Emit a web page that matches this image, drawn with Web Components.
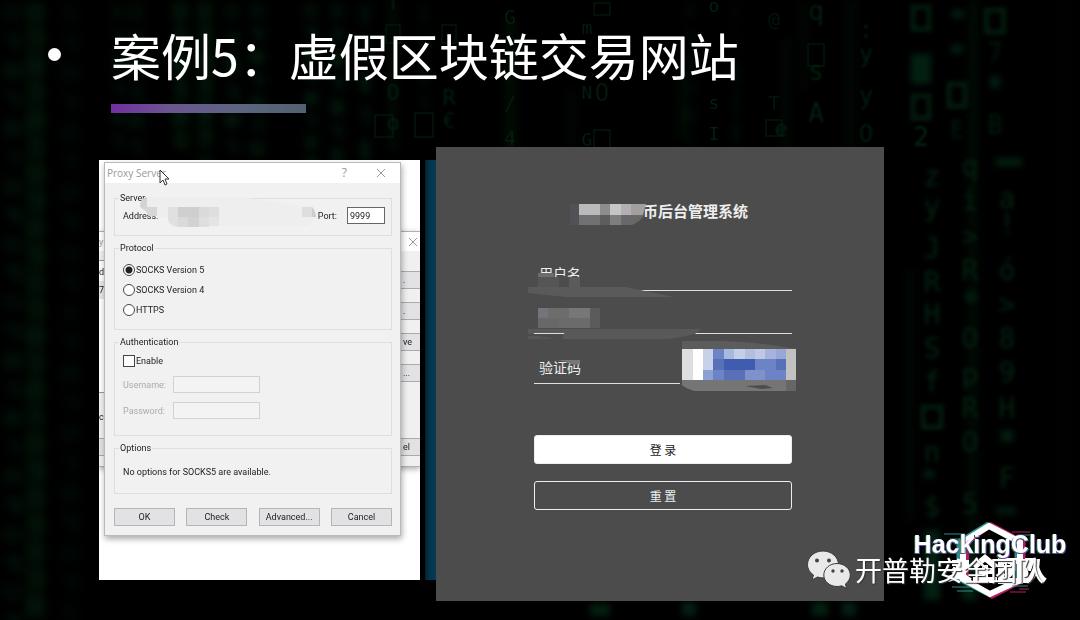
<!DOCTYPE html>
<html lang="zh-CN">
<head>
<meta charset="utf-8">
<meta name="viewport" content="width=device-width, initial-scale=1">
<title>案例5：虚假区块链交易网站</title>
<style>
  body { margin: 0; background: #000; color: #fff; font-family: "Noto Sans", "Noto Sans CJK SC", sans-serif; }
</style>
</head>
<body>
<case-slide>
  <slide-title slot="title">案例5：虚假区块链交易网站</slide-title>
  <desktop-shot slot="left"></desktop-shot>
  <login-panel slot="right"></login-panel>
  <club-logo slot="mark">HackingClub</club-logo>
  <team-mark slot="mark">开普勒安全团队</team-mark>
</case-slide>

<script>
class Base extends HTMLElement {
  constructor() {
    super();
    this.attachShadow({ mode: 'open' }).innerHTML = this.constructor.html;
  }
}

/* Falling glyph columns behind the slide */
class RainBackdrop extends HTMLElement {
  constructor() {
    super();
    // Readable columns: x, size, blur, opacity, then glyph and baseline pairs
    const cols = [
      [393, 22, 1, .9, 'T', 10, 'O', 100, 'o', 130],
      [449, 22, 1, .8, 'R', 105, '€', 128],
      [510, 20, 0, .8, 'G', 24, '/', 110, '4', 145],
      [587, 18, 0, .8, 'm', 34, 'N', 99, 'G', 146],
      [602, 24, 0, .7, 'O', 101],
      [714, 18, 0, .9, 'o', 12, 's', 109, 'I', 140],
      [774, 20, 0, .6, '@', 26, 'T', 110],
      [781, 22, 1, 1, 'e', 136],
      [816, 26, 1, .9, 'q', 20, 's', 80, 'A', 122],
      [866, 24, 1, .8, ':', 38, 'y', 62, 'y', 104, 'O', 142],
      [921, 26, 1, 1, '2', 146],
      [957, 24, 2, .8, 'E', 138],
      [995, 26, 2, .8, '7', 62, 'B', 134],
      [932, 28, 2, 1, 'z', 186, 'y', 216, 'J', 258, 'R', 292, 'H', 324, 'S', 358, 'f', 392, 'n', 462, '$', 516],
      [970, 28, 2, 1, 'q', 176, 'i', 210, '>', 246, 'R', 280, 'O', 348, 'p', 384, 'R', 418, 'O', 452, '5', 514],
      [1007, 28, 2, 1, 'a', 208, '!', 234, 'ó', 280, '>', 314, '8', 348, '9', 382, 'H', 418, 'F', 488]
    ];
    const text = cols.map(([x, size, blur, o, ...g]) => {
      let t = '';
      for (let i = 0; i < g.length; i += 2) t += `<text x="${x}" y="${g[i + 1]}">${g[i].replace('>', '&gt;')}</text>`;
      return `<g font-size="${size}" opacity="${o}"${blur ? ` filter="url(#b${blur})"` : ''}>${t}</g>`;
    }).join('');
    // Columns too far out of focus to read: x, width, step, bottom, opacity
    const blobs = [[13, 20, 29, 620, .5], [36, 18, 27, 620, .5], [70, 18, 30, 620, .3], [118, 12, 26, 160, .6], [136, 16, 27, 160, .6],
      [180, 18, 26, 160, .6], [205, 12, 25, 160, .7], [232, 16, 27, 160, .7], [257, 15, 23, 160, .8], [311, 13, 22, 160, .9],
      [337, 13, 24, 160, .9], [365, 10, 34, 160, .8], [424, 8, 30, 100, .5], [690, 8, 26, 150, .5], [735, 5, 30, 160, .5]]
      .map(([x, w, step, end, o]) => {
        let r = '';
        for (let y = 4, i = 0; y < end; y += step, i++)
          r += `<path d="M${x - w / 2} ${y}h${w}v${step * .6}h${i % 2 ? -w / 2 : -w}z" opacity="${.6 + (i * 7 % 5) / 10}"/>`;
        return `<g opacity="${o}">${r}</g>`;
      }).join('');
    const boxes = [[393, 25, 14, 18], [384, 115, 18, 22], [424, 113, 18, 24], [449, 25, 14, 18], [602, 3, 16, 12], [602, 130, 16, 24], [816, 44, 16, 22], [774, 120, 16, 16]]
      .map(([x, y, w, h]) => `<rect x="${x - w / 2}" y="${y}" width="${w}" height="${h}"/>`).join('');
    const thick = [[921, 15, 16, 22], [921, 104, 16, 22], [957, 92, 16, 22], [995, 18, 17, 22], [932, 415, 18, 20]]
      .map(([x, y, w, h]) => `<rect x="${x - w / 2}" y="${y - 8}" width="${w}" height="${h}"/>`).join('');
    const streaks = [[35, 0, 620, 20], [205, 0, 150, 18], [180, 0, 150, 14], [393, 0, 150, 8], [510, 20, 130, 12], [571, 90, 60, 5], [683, 70, 70, 10],
      [737, 60, 90, 4], [804, 0, 90, 5], [850, 0, 150, 7], [786, 40, 110, 6], [973, 0, 600, 10], [910, 270, 250, 5], [1064, 0, 520, 2]]
      .map(([x, y, h, w]) => `<rect x="${x - w / 2}" y="${y}" width="${w}" height="${h}"/>`).join('');
    this.attachShadow({ mode: 'open' }).innerHTML = `
      <style>
        :host { display: block; overflow: hidden; }
        svg { display: block; width: 100%; height: 100%; }
        text { font-family: "DejaVu Sans Mono", monospace; text-anchor: middle; }
      </style>
      <svg viewBox="0 0 1080 620" preserveAspectRatio="xMidYMid slice" aria-hidden="true">
        <defs>
          ${[1, 2, 3, 4].map(n => `<filter id="b${n}" filterUnits="userSpaceOnUse" x="-20" y="-20" width="1120" height="660" color-interpolation-filters="sRGB"><feGaussianBlur stdDeviation="${n}"/></filter>`).join('')}
        </defs>
        <g fill="#020b04" filter="url(#b4)">${streaks}</g>
        <g fill="#031d0e" filter="url(#b4)">${blobs}</g>
        <g fill="none" stroke="#04200f">${boxes}</g>
        <g fill="none" stroke="#031c0d" stroke-width="5" filter="url(#b2)">${thick}</g>
        <g fill="#031f10" filter="url(#b3)">
          <path d="M911 54h20v30h-20zM952 10h12v8h-12zM951 45h12v8h-12zM990 76h10v12h-10zM966 292h10v10h-10zM996 158h26v8h-26zM1001 430h12v12h-12zM996 508h20v6h-20zM924 470h10v8h-10z"/>
          <path d="M590 604h20v12h-20zM682 602h14v14h-14zM812 602h16v14h-16zM842 602h14v14h-14zM924 530h16v70h-16zM962 540h14v60h-14z"/>
        </g>
        <g fill="#042412">${text}</g>
      </svg>`;
  }
}
customElements.define('rain-backdrop', RainBackdrop);

class CaseSlide extends Base {
  static html = `
    <style>
      :host { display: block; position: relative; min-height: 100vh; overflow: hidden; background: #000; }
      rain-backdrop { position: absolute; inset: 0; }
      .page { position: relative; padding: 28px 0 19px; }
      main { display: grid; grid-template-columns: 99fr 321fr 5fr 11fr 448fr 196fr; margin-top: 34px; }
      .left { grid-column: 2; margin: 13px 0 21px; }
      .strip { grid-column: 4; margin: 13px 0 21px; background: linear-gradient(90deg, #02202f, #04344d 40%, #053c56); }
      .right { grid-column: 5; }
      .left, .right { display: grid; min-width: 0; }
    </style>
    <rain-backdrop></rain-backdrop>
    <div class="page">
      <slot name="title"></slot>
      <main>
        <div class="left"><slot name="left"></slot></div>
        <div class="strip"></div>
        <div class="right"><slot name="right"></slot></div>
      </main>
    </div>
    <slot name="mark"></slot>`;
}
customElements.define('case-slide', CaseSlide);

class SlideTitle extends Base {
  static html = `
    <style>
      :host { display: grid; grid-template-columns: 111px 1fr; align-items: center; row-gap: 16px; }
      .dot { width: 13px; height: 13px; margin: -8px 0 0 48px; border-radius: 50%; background: #fff; }
      h1 { margin: -4px 0 4px; font: 400 50px/60px "Noto Sans CJK SC", sans-serif; }
      .bar { grid-column: 2; width: 195px; height: 9px; background: linear-gradient(90deg, #7030a0, #6b5690 30%, #5c6580 65%, #51626f); }
    </style>
    <span class="dot"></span>
    <h1><slot></slot></h1>
    <div class="bar"></div>`;
}
customElements.define('slide-title', SlideTitle);

/* Titled group of controls */
class GroupBox extends HTMLElement {
  constructor() {
    super();
    this.attachShadow({ mode: 'open' }).innerHTML = `
      <style>
        :host { display: block; }
        fieldset { box-sizing: border-box; height: 100%; margin: 0; padding: 0 5px 0 4px; border: 1px solid #dedede; min-width: 0; }
        legend { padding: 0 1px; line-height: 12px; }
        .in { padding-left: 4px; }
      </style>
      <fieldset><legend>${this.getAttribute('label')}</legend><div class="in"><slot></slot></div></fieldset>`;
  }
}
customElements.define('group-box', GroupBox);

class ProxyDialog extends Base {
  static html = `
    <style>
      :host { display: block; background: #f1f1f1; border: 1px solid #b9b9b9; box-shadow: 1px 3px 6px #0005; color: #222;
        font: 9px/12px Roboto, "Liberation Sans", sans-serif; }
      header { display: flex; align-items: center; height: 20px; padding: 0 14px 0 2px; background: #fff; color: #999;
        font: 10px/20px "Open Sans", sans-serif; }
      header span { flex: 1; }
      header b { font-weight: 400; font-size: 12px; margin-right: 29px; }
      form { display: flex; flex-direction: column; gap: 6px; padding: 9px 8px 9px 9px; }
      input { box-sizing: border-box; margin: 0; font: inherit; color: inherit; border-radius: 0; }
      .row { display: flex; align-items: center; }
      .server { height: 44px; } .protocol { height: 88px; } .auth { height: 100px; } .options { height: 52px; }
      .server .row { padding: 3px 1px 0 0; }
      .server .gap { flex: 1; }
      .port { width: 38px; height: 17px; margin-left: 10px; padding: 0 2px; border: 1px solid #666; background: #fff; font-size: 9px; }
      .protocol .row { height: 20px; }
      .protocol .row:first-child { margin-top: 6px; }
      input[type=radio], input[type=checkbox] { appearance: none; width: 12px; height: 12px; margin: 0 1px 0 0; border: 1px solid #444; background: #fff; }
      input[type=radio] { border-radius: 50%; }
      input[type=radio]:checked { background: radial-gradient(circle, #222 0 3px, #fff 4px); }
      .enable { padding: 7px 0 9px; }
      .cred { color: #aaa; padding-bottom: 9px; }
      .cred label { width: 50px; }
      .cred input { width: 87px; height: 17px; border: 1px solid #d2d2d2; background: #f3f3f3; }
      .options p { margin: 12px 0 0; }
      footer { display: flex; justify-content: space-between; margin-top: 8px; }
      button { width: 61px; height: 18px; padding: 0; border: 1px solid #b5b5b8; border-radius: 0; background: #e2e1e4; color: #222; font: inherit; }
    </style>
    <header><span>Proxy Server</span><b>?</b>
      <svg width="10" height="10" viewBox="0 0 10 10"><path d="M1 1l8 8M9 1l-8 8" stroke="#999" fill="none"/></svg></header>
    <form onsubmit="return false">
      <group-box class="server" label="Server"><div class="row">
        <span>Address:</span><span class="gap"></span>
        <label for="port">Port:</label><input class="port" id="port" value="9999"></div></group-box>
      <group-box class="protocol" label="Protocol">
        <div class="row"><input type="radio" name="p" id="s5" checked><label for="s5">SOCKS Version 5</label></div>
        <div class="row"><input type="radio" name="p" id="s4"><label for="s4">SOCKS Version 4</label></div>
        <div class="row"><input type="radio" name="p" id="ht"><label for="ht">HTTPS</label></div>
      </group-box>
      <group-box class="auth" label="Authentication">
        <div class="row enable"><input type="checkbox" id="en"><label for="en">Enable</label></div>
        <div class="row cred"><label for="un">Username:</label><input id="un" disabled></div>
        <div class="row cred"><label for="pw">Password:</label><input id="pw" type="password" disabled></div>
      </group-box>
      <group-box class="options" label="Options"><p>No options for SOCKS5 are available.</p></group-box>
      <footer><button>OK</button><button>Check</button><button>Advanced...</button><button>Cancel</button></footer>
    </form>`;
}
customElements.define('proxy-dialog', ProxyDialog);

/* The window that lies mostly hidden behind the dialog */
class BackWindow extends Base {
  static html = `
    <style>
      :host { display: flex; flex-direction: column; box-sizing: border-box; overflow: hidden; background: #f0f0f0; color: #222;
        border: solid #b0b0b0; border-width: 1px 0; box-shadow: 0 2px 6px #0005; font: 9px/12px Roboto, sans-serif; }
      header { display: flex; align-items: center; justify-content: space-between; height: 19px; padding-right: 2px; background: #fff; color: #999; }
      .body { display: flex; justify-content: space-between; flex: 1; }
      .body > div { display: flex; flex-direction: column; width: 19px; }
      .list { margin-top: 9px; height: 131px; border: solid #999; border-width: 1px 0; background: #fff; }
      .list span, .cap { display: block; height: 18px; line-height: 18px; }
      .list span:first-child { margin-top: 2px; }
      .list span:last-child { background: #e6e6e6; }
      .cap { margin-top: 15px; }
      button { box-sizing: border-box; height: 18px; flex: none; padding: 0 2px; border: solid #aaa; border-width: 1px 0; border-radius: 0; background: #e2e1e4; color: #222; font: inherit; text-align: left; }
      .left button { margin-top: 12px; }
      .right { gap: 13px; padding-top: 20px; }
      .right button:last-child { margin-top: 43px; }
    </style>
    <header><span>y</span><svg width="10" height="10" viewBox="0 0 10 10"><path d="M1 1l8 8M9 1l-8 8" stroke="#999" fill="none"/></svg></header>
    <div class="body">
      <div class="left"><div class="list"><span>d</span><span>7</span></div><span class="cap">c</span><button aria-label="Help"></button></div>
      <div class="right"><button>.</button><button>.</button><button>ve</button><button>...</button><button>el</button></div>
    </div>`;
}
customElements.define('back-window', BackWindow);

class DesktopShot extends Base {
  static html = `
    <style>
      :host { display: block; position: relative; overflow: hidden; background: #fff; padding: 2px 19px 43px 5px; }
      back-window { position: absolute; left: 0; right: 0; top: 71px; height: 236px; }
      proxy-dialog { position: relative; }
      .over { position: absolute; left: 0; top: 0; width: 321px; height: 420px; pointer-events: none; }
    </style>
    <back-window></back-window>
    <proxy-dialog></proxy-dialog>
    <svg class="over" viewBox="99 160 321 420" aria-hidden="true">
      <path d="M147 197H240L302 206H312Q316 210 316 217L308 226H178Q168 226 168 217H157V207H147Z" fill="#eeeeee"/>
      <path d="M147 197Q140 198 140 207L147 212Z" fill="#d3d3d3"/>
      <path d="M143 207h14v9h-8z" fill="#d6d6d6"/>
      <path d="M168 207h10v20q-10-1-10-9z" fill="#e0e0e0"/>
      <path d="M178 207h21v10h-21z" fill="#cfcfcf"/>
      <path d="M199 207h10v10h-10zM178 217h10v10h-10z" fill="#dadada"/>
      <path d="M188 217h11v10h-11z" fill="#d2d2d2"/>
      <path d="M209 207h10v10h-10zM199 217h10v10h-10z" fill="#dedede"/>
      <path d="M209 217h10v9h-10z" fill="#e4e4e4"/>
      <path d="M302 207h10v10h-10z" fill="#dedede"/><path d="M312 207q4 5 4 10h-4z" fill="#ccccd2"/>
      <path d="M160 170v13l3-3 2 5 2-1-2-5h4z" fill="#fff" stroke="#333"/>
    </svg>`;
}
customElements.define('desktop-shot', DesktopShot);

class LoginPanel extends Base {
  static html = `
    <style>
      :host { display: block; position: relative; box-sizing: border-box; background: #4c4c4c; color: #eee; padding: 53px 92px 91px 98px;
        font: 14px/20px "Noto Sans CJK SC", sans-serif; }
      h2 { margin: 0 44px 0 0; text-align: right; font: 700 15px/22px "Noto Sans CJK SC", sans-serif; }
      form { display: flex; flex-direction: column; }
      .field { display: flex; box-sizing: border-box; align-items: center; height: 43px; padding: 7px 5px 0; border-bottom: 1px solid #e0e0e0; }
      .field input { flex: 1; min-width: 0; height: 20px; padding: 0; border: 0; outline: 0; background: none; color: inherit; font: inherit; }
      .user { margin-top: 26px; }
      .code { width: 146px; height: 50px; padding-top: 17px; margin-bottom: 51px; }
      button { height: 29px; margin: 0 0 17px; padding: 0; border: 1px solid #eee; border-radius: 3px; background: #fff; color: #222; font: 12px/20px "Noto Sans CJK SC", sans-serif; }
      button + button { margin: 0; background: none; color: #eee; }
      svg { position: absolute; left: 0; top: 0; width: 448px; height: 454px; pointer-events: none; }
    </style>
    <h2>币后台管理系统</h2>
    <form onsubmit="return false">
      <div class="field user"><label for="u">用户名</label><input id="u"></div>
      <div class="field"><input type="password" aria-label="密码"></div>
      <div class="field code"><label for="c">验证码</label><input id="c"></div>
      <button>登 录</button>
      <button>重 置</button>
    </form>
    <svg viewBox="436 147 448 454" aria-hidden="true">
      <path d="M570 204h9v21h-9z" fill="#505255"/>
      <path d="M579 204h21v11h-21z" fill="#bbb9bb"/><path d="M600 204h10v11h-10z" fill="#8d8d8d"/>
      <path d="M610 204h11v11h-11z" fill="#c3c5c7"/><path d="M621 204h10v11h-10z" fill="#b3b0b4"/><path d="M631 204h15l-3 11h-12z" fill="#a39f9d"/>
      <path d="M579 215h21v10h-21z" fill="#717171"/><path d="M600 215h10v10h-10z" fill="#5d5d5d"/><path d="M610 215h11v10h-11z" fill="#7e7e7e"/>
      <path d="M621 215h23q-3 6-12 10h-11z" fill="#686868"/>
      <path d="M538 277h42v10h-42z" fill="#4c4c4c"/>
      <path d="M538 273h16v4h-16z" fill="#6c6c6c"/><path d="M538 277h21v10h-21z" fill="#555"/><path d="M569 277h11v10h-11z" fill="#5b5b5b"/>
      <path d="M528 287H626L650 292 674 297H566L528 293Z" fill="#5a5a5a"/>
      <path d="M538 308h10v10h-10z" fill="#74747a"/><path d="M548 308h21v10h-21z" fill="#6f6d6c"/><path d="M569 308h21v10h-21z" fill="#787777"/><path d="M590 308h10v20h-10z" fill="#5d5b59"/>
      <path d="M538 318h21v10h-21z" fill="#666869"/><path d="M559 318h31v10h-31z" fill="#6c6b69"/>
      <path d="M528 329H701L695 334Q680 338 667 339H563V334H528Z" fill="#595959"/><path d="M534 333.500h30" stroke="#ddd"/>
      <path d="M528 336h11l18 3h-29z" fill="#565656"/>
      <path d="M557 360h23v4l-6 1q-8-4-17-5" fill="#777"/>
      <path d="M682 341H720Q760 342 790 348L796 349H682Z" fill="#5c5c5c"/>
      <path d="M682 349h114v31h-114z" fill="#6c84c5"/>
      <path d="M682 349h11v31h-11z" fill="#dedede"/><path d="M693 349h10v31h-10z" fill="#fff"/><path d="M703 349h10v21h-10z" fill="#c7d1e9"/>
      <path d="M703 370h10v10h-10z" fill="#8ca0d2"/><path d="M724 349h10v10h-10z" fill="#aab8df"/><path d="M734 349h11v10h-11z" fill="#c3cee8"/>
      <path d="M745 349h10v10h-10z" fill="#b1bfdf"/><path d="M755 349h10v10h-10z" fill="#bfc9e4"/><path d="M765 349h11v10h-11z" fill="#a6b3dc"/><path d="M776 349h10v10h-10z" fill="#98a8d6"/>
      <path d="M724 359h31v11h-31z" fill="#405cae"/><path d="M713 359h11v11h-11zM724 370h21v10h-21zM776 359h10v11h-10z" fill="#5870b8"/>
      <path d="M745 370h20v10h-20z" fill="#7e91ca"/><path d="M786 349h10v31h-10z" fill="#c1c1c1"/>
      <path d="M682 380h114v11H694Q685 388 682 385Z" fill="#757575"/><path d="M745 386l20-1 8 3-12 1z" fill="#4d4d4d"/><path d="M786 380h10v11h-10z" fill="#666"/>
    </svg>`;
}
customElements.define('login-panel', LoginPanel);

class ClubLogo extends Base {
  static html = `
    <style>
      :host { display: grid; position: absolute; right: 11px; bottom: 18px; width: 158px; height: 82px; justify-items: center; }
      svg, span { grid-area: 1 / 1; }
      svg { width: 158px; height: 82px; }
      span { z-index: 1; padding-top: 11px; font: 700 25px/26px "Liberation Sans", sans-serif; color: #fff; text-shadow: 1px 1px #6a55a0, -1px 1px #1d6040; }
    </style>
    <svg viewBox="911 521 158 82" aria-hidden="true" fill="none">
      <path d="M959 543L987 526L1017 543V581L990 596L959 580Z" stroke="#2a8f8b" stroke-width="5"/>
      <path d="M967 543L991 526L1023 543V581L992 597L966 580Z" stroke="#b51c65" stroke-width="5"/>
      <path d="M963 543L989 527L1020 543V581L990 595L963 580Z" stroke="#fff" stroke-width="6"/>
      <path d="M944 535h21M950 540h10M1017 536h17M952 588h18M1012 587h16M957 592h16" stroke="#2a8f8b"/>
      <path d="M1012 533h18M1019 590h10M1010 593h16" stroke="#b51c65"/>
      <path d="M952 564h17M960 560l-3 20M948 580q14-3 21-14M952 570l18 12M974 568l11-9 11 9M976 572h18M985 566v15M973 581h24M1001 562h19v20h-19zM1006 569h10M1013 564q0 11-8 14M1025 562v22M1025 562h6l-3 9M1037 560q0 14-9 22M1036 568q3 10 9 14" stroke="#fff" stroke-width="6"/>
    </svg>
    <span><slot></slot></span>`;
}
customElements.define('club-logo', ClubLogo);

class TeamMark extends Base {
  static html = `
    <style>
      :host { display: flex; position: absolute; right: 36px; bottom: 30px; align-items: center; gap: 4px; color: #fff;
        font: 27px/40px "Noto Sans CJK SC", sans-serif; text-shadow: 1px 1px 1px #333; }
      svg { width: 44px; height: 40px; flex: none; }
    </style>
    <svg viewBox="808 550 44 40" aria-hidden="true">
      <g fill="#e9e9e9" stroke="#3a3a3a">
        <path d="M824 551c-8.500 0-15.500 6-15.500 13.500 0 4.300 2.300 8 6 10.500l-1.500 5 5.500-3c2 .6 3.500.9 5.500.9 8.500 0 15.500-6 15.500-13.400S832.500 551 824 551z"/>
        <path d="M838 563.500c-7.300 0-13.200 5.200-13.200 11.500s5.900 11.500 13.200 11.500c1.600 0 3.200-.3 4.700-.7l5 2.700-1.300-4.500c3-2.100 4.900-5.300 4.900-9 0-6.300-6-11.500-13.300-11.500z"/>
      </g>
      <g fill="#444"><circle cx="818" cy="560.500" r="2"/><circle cx="830" cy="560.500" r="2"/><circle cx="834" cy="571" r="1.700"/><circle cx="843" cy="571" r="1.700"/></g>
    </svg>
    <slot></slot>`;
}
customElements.define('team-mark', TeamMark);
</script>
</body>
</html>
